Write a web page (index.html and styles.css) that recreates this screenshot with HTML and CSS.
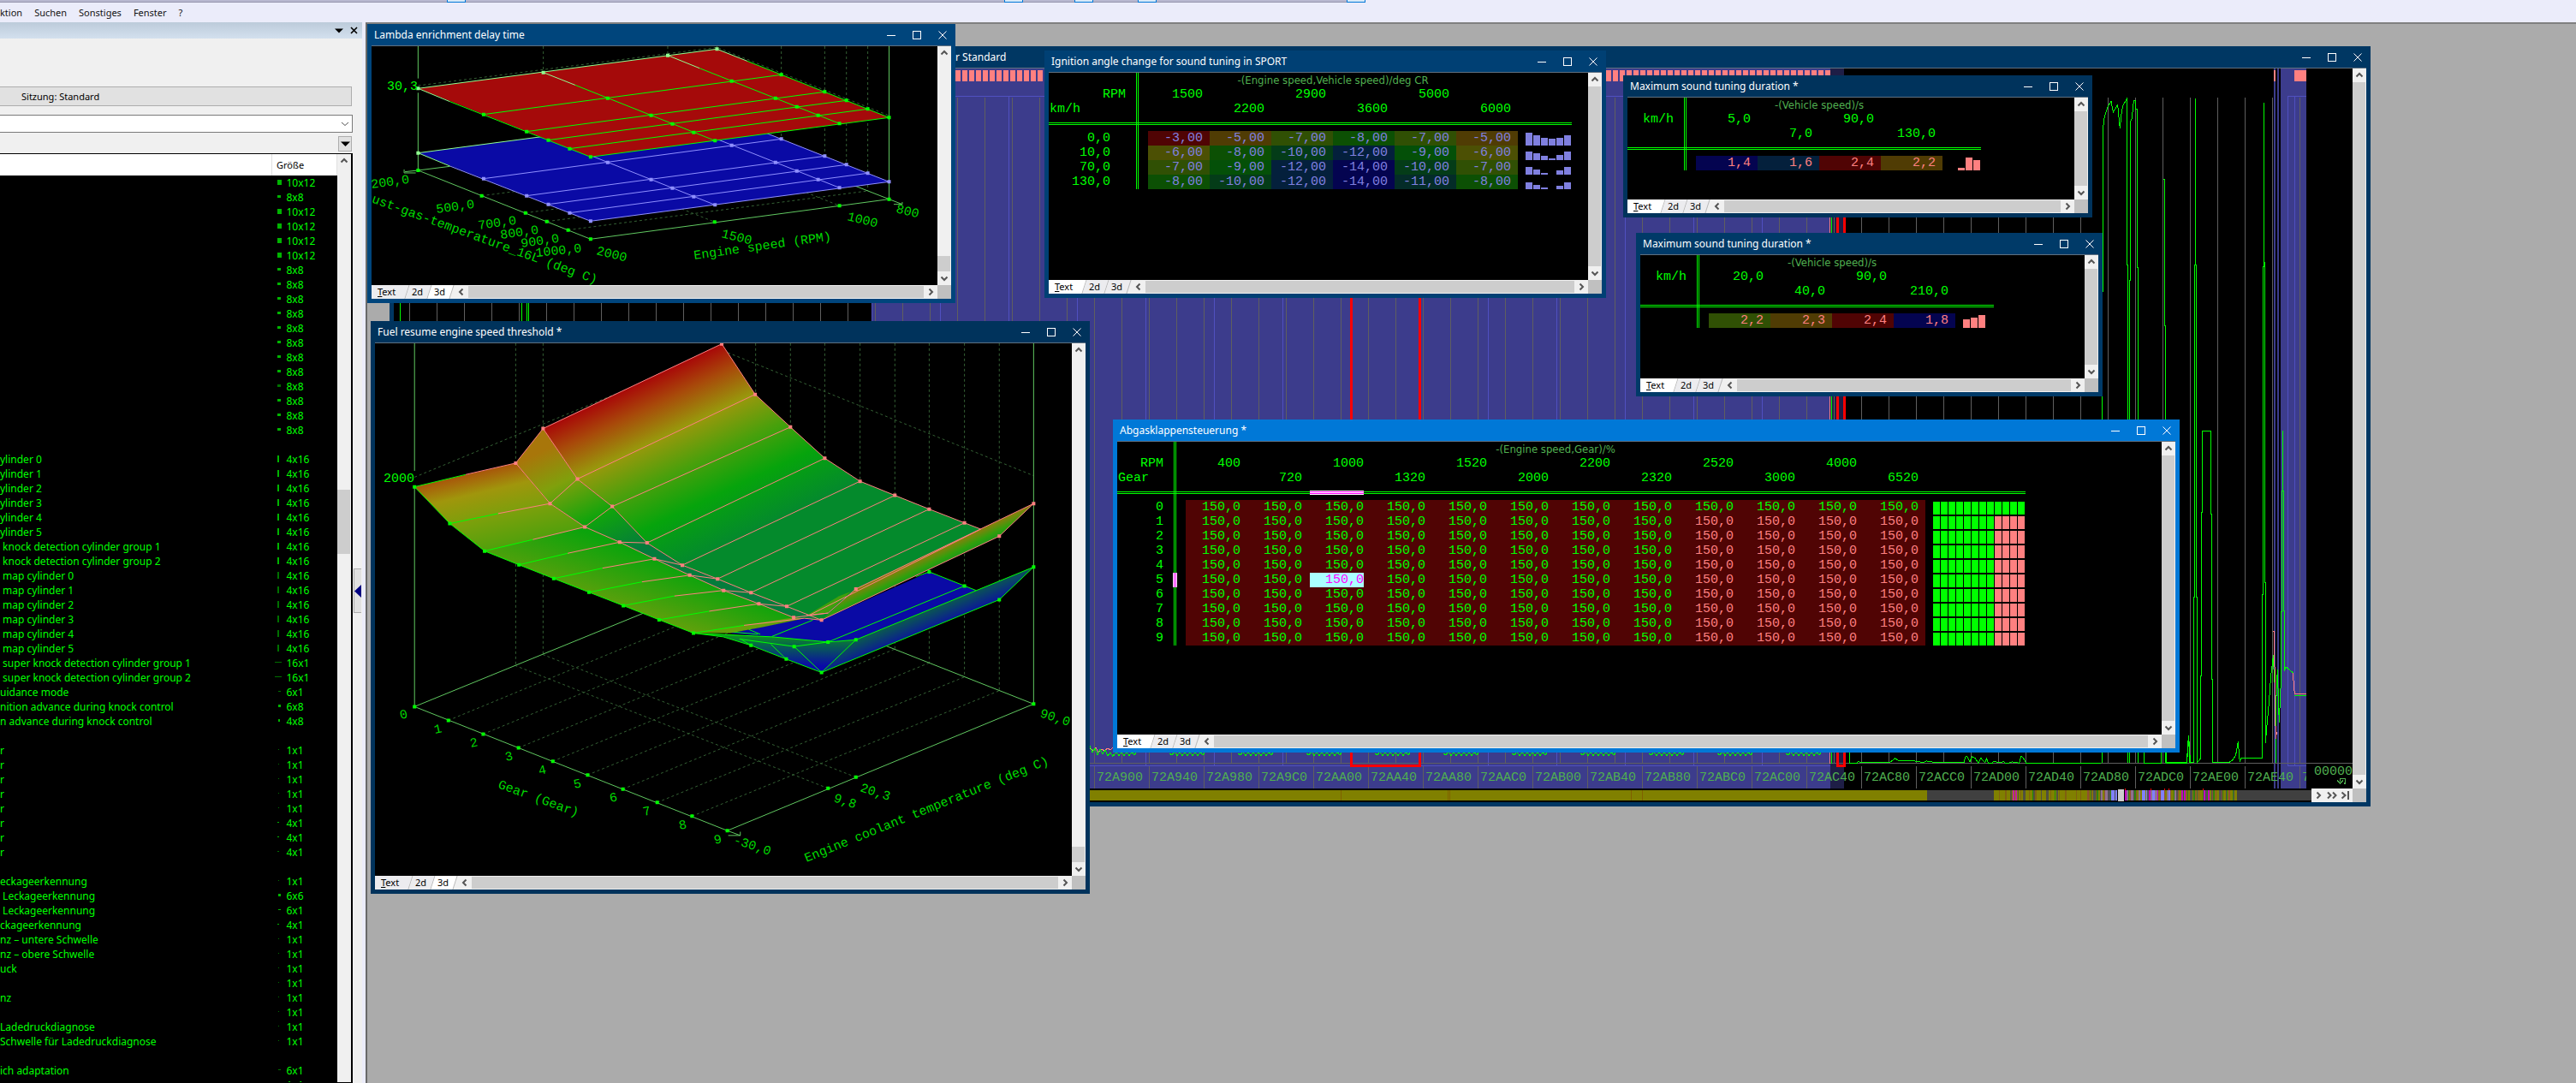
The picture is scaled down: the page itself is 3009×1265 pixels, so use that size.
FILE: index.html
```
<!DOCTYPE html>
<html lang="de">
<head>
<meta charset="utf-8">
<title>Kennfeld-Editor</title>
<link rel="stylesheet" href="styles.css">
</head>
<body>
<svg class="defs" width="0" height="0" aria-hidden="true">
  <symbol id="min" viewBox="0 0 12 12"><path d="M1 6.5h10"/></symbol>
  <symbol id="max" viewBox="0 0 12 12"><rect x="1.5" y="1.5" width="9" height="9"/></symbol>
  <symbol id="close" viewBox="0 0 12 12"><path d="M1.5 1.5l9 9M10.5 1.5l-9 9"/></symbol>
  <symbol id="up" viewBox="0 0 16 16"><path d="M4.500 9.500L8 6l3.500 3.500"/></symbol>
  <symbol id="down" viewBox="0 0 16 16"><path d="M4.500 6.500L8 10l3.500-3.500"/></symbol>
  <symbol id="left" viewBox="0 0 16 16"><path d="M9.500 4.500L6 8l3.500 3.500"/></symbol>
  <symbol id="right" viewBox="0 0 16 16"><path d="M6.500 4.500L10 8l-3.500 3.500"/></symbol>
  <symbol id="right2" viewBox="0 0 16 16"><path d="M3 4.500L6.500 8 3 11.500M9 4.500L12.500 8 9 11.500"/></symbol>
  <symbol id="last" viewBox="0 0 16 16"><path d="M3.500 4.500L7.500 8l-4 3.500M11 3v10"/></symbol>
</svg>

<div class="toolbar"><i></i><i></i><i></i><i></i><i></i></div>
<nav class="menubar">
  <button type="button">ktion</button><button type="button">Suchen</button><button type="button">Sonstiges</button><button type="button">Fenster</button><button type="button">?</button>
</nav>

<main class="workspace">
<aside class="panel">
  <div class="panel-title">
    <button type="button" aria-label="Menü"><svg width="10" height="6" viewBox="0 0 10 6"><path d="M0 0.500h10L5 5.500z" fill="#000"/></svg></button>
    <button type="button" aria-label="Schließen"><svg width="9" height="9" viewBox="0 0 9 9"><path d="M1 1l7 7M8 1L1 8" stroke="#000" stroke-width="1.600"/></svg></button>
  </div>
  <div class="panel-body">
    <div class="panel-main">
      <button type="button" class="session">Sitzung: Standard</button>
      <div class="combo"><select aria-label="Filter"><option></option></select><svg width="10" height="6" viewBox="0 0 10 6"><path d="M1 1l4 3.500L9 1" fill="none" stroke="#555"/></svg></div>
      <div class="options"><button type="button" aria-label="Optionen"><svg width="11" height="6" viewBox="0 0 11 6"><path d="M0 0.500h11L5.500 6z" fill="#000"/></svg></button></div>
      <div class="list">
        <table>
          <thead><tr><th></th><th>Größe</th></tr></thead>
          <tbody>
<tr><td><td><i class="a"></i>10x12
<tr><td><td><i class="b"></i>8x8
<tr><td><td><i class="a"></i>10x12
<tr><td><td><i class="a"></i>10x12
<tr><td><td><i class="a"></i>10x12
<tr><td><td><i class="a"></i>10x12
<tr><td><td><i class="b"></i>8x8
<tr><td><td><i class="b"></i>8x8
<tr><td><td><i class="b"></i>8x8
<tr><td><td><i class="b"></i>8x8
<tr><td><td><i class="b"></i>8x8
<tr><td><td><i class="b"></i>8x8
<tr><td><td><i class="b"></i>8x8
<tr><td><td><i class="b"></i>8x8
<tr><td><td><i class="b dim"></i>8x8
<tr><td><td><i class="b"></i>8x8
<tr><td><td><i class="b"></i>8x8
<tr><td><td><i class="b"></i>8x8
<tr><td><td>
<tr><td>ylinder 0<td><i class="c"></i>4x16
<tr><td>ylinder 1<td><i class="c"></i>4x16
<tr><td>ylinder 2<td><i class="c"></i>4x16
<tr><td>ylinder 3<td><i class="c"></i>4x16
<tr><td>ylinder 4<td><i class="c"></i>4x16
<tr><td>ylinder 5<td><i class="c"></i>4x16
<tr><td>&nbsp;knock detection cylinder group 1<td><i class="c"></i>4x16
<tr><td>&nbsp;knock detection cylinder group 2<td><i class="c"></i>4x16
<tr><td>&nbsp;map cylinder 0<td><i class="c dim"></i>4x16
<tr><td>&nbsp;map cylinder 1<td><i class="c dim"></i>4x16
<tr><td>&nbsp;map cylinder 2<td><i class="c dim"></i>4x16
<tr><td>&nbsp;map cylinder 3<td><i class="c dim"></i>4x16
<tr><td>&nbsp;map cylinder 4<td><i class="c dim"></i>4x16
<tr><td>&nbsp;map cylinder 5<td><i class="c dim"></i>4x16
<tr><td>&nbsp;super knock detection cylinder group 1<td><i class="d dim"></i>16x1
<tr><td>&nbsp;super knock detection cylinder group 2<td><i class="d dim"></i>16x1
<tr><td>uidance mode<td><i class="e dim"></i>6x1
<tr><td>nition advance during knock control<td><i class="f"></i>6x8
<tr><td>n advance during knock control<td><i class="g"></i>4x8
<tr><td><td>
<tr><td>r<td><i class="h dim"></i>1x1
<tr><td>r<td><i class="h dim"></i>1x1
<tr><td>r<td><i class="h dim"></i>1x1
<tr><td>r<td><i class="h dim"></i>1x1
<tr><td>r<td><i class="h dim"></i>1x1
<tr><td>r<td><i class="i"></i>4x1
<tr><td>r<td><i class="i"></i>4x1
<tr><td>r<td><i class="i dim"></i>4x1
<tr><td><td>
<tr><td>eckageerkennung<td><i class="h dim"></i>1x1
<tr><td>&nbsp;Leckageerkennung<td><i class="f"></i>6x6
<tr><td>&nbsp;Leckageerkennung<td><i class="e"></i>6x1
<tr><td>ckageerkennung<td><i class="i"></i>4x1
<tr><td>nz – untere Schwelle<td><i class="h dim"></i>1x1
<tr><td>nz – obere Schwelle<td><i class="h dim"></i>1x1
<tr><td>uck<td><i class="h dim"></i>1x1
<tr><td><td><i class="h dim"></i>1x1
<tr><td>nz<td><i class="h dim"></i>1x1
<tr><td><td><i class="h dim"></i>1x1
<tr><td>Ladedruckdiagnose<td><i class="h dim"></i>1x1
<tr><td>Schwelle für Ladedruckdiagnose<td><i class="h dim"></i>1x1
<tr><td><td>
<tr><td>ich adaptation<td><i class="e dim"></i>6x1
<tr><td><td><i class="h dim"></i>1x1
          </tbody>
        </table>
        <div class="vscroll list-scroll"><button type="button" aria-label="Nach oben"><svg><use href="#up"/></svg></button><span></span></div>
      </div>
    </div>
    <div class="splitter"><button type="button" aria-label="Einklappen"><svg width="8" height="15" viewBox="0 0 8 15"><path d="M8 0v15L0 7.500z" fill="#000080"/></svg></button></div>
  </div>
</aside>

<section class="desktop">

<article class="window hex">
  <header><h2>r Standard</h2><div class="ctl"><button type="button" aria-label="Minimieren"><svg><use href="#min"/></svg></button><button type="button" aria-label="Maximieren"><svg><use href="#max"/></svg></button><button type="button" aria-label="Schließen"><svg><use href="#close"/></svg></button></div></header>
  <div class="client">
    <svg class="view" viewBox="460 80 2288 841" preserveAspectRatio="xMinYMin slice" shape-rendering="crispEdges">
      <defs>
        <pattern id="g32" patternUnits="userSpaceOnUse" x="1118" y="0" width="32" height="2000"><rect width="1" height="2000" fill="#5f5f5f"/></pattern>
        <pattern id="g64" patternUnits="userSpaceOnUse" x="1342" y="0" width="64" height="2000"><rect width="1" height="2000" fill="#5f5f5f"/></pattern>
        <pattern id="v80" patternUnits="userSpaceOnUse" x="1018" y="0" width="80" height="2000"><rect width="1" height="2000" fill="#5050c0"/></pattern>
        <pattern id="s8" patternUnits="userSpaceOnUse" x="1124" y="0" width="8" height="2000"><rect width="6" height="2000" fill="#ff8080"/></pattern>
        <pattern id="wave" patternUnits="userSpaceOnUse" x="1278" y="0" width="80" height="2000"><path d="M8 880l3 2 3-4 3 5 3-5 3 5 3-5 3 5 3-5 3 5 3-5 3 5 3-5 3 4 3-4" fill="none" stroke="#0f0"/></pattern>
      </defs>
      <rect x="1018" y="80" width="1120" height="841" fill="#3c3c8c"/>
      <rect x="2138" y="80" width="16" height="841" fill="#1e1e46"/>
      <path fill="#3c3c8c" d="M2656 80h2v841h-2zM2660 80h2v841h-2zM2664 80h30v841h-30z"/>
      <rect x="1018" y="82" width="1120" height="13" fill="url(#s8)"/>
      <path fill="#ff8080" d="M2656 82h2v13h-2zM2680 82h14v13h-14z"/>
      <rect x="460" y="114" width="2234" height="778" fill="url(#g32)"/>
      <rect x="1018" y="112" width="1120" height="782" fill="url(#v80)"/>
      <path fill="none" stroke="#5050c0" d="M1018 112.500h1120M1018 894.500h1120M2672 112.500h22M2672.500 112v782M2680.500 112v782M2672 894.500h22"/>
      <path fill="none" stroke="#5f5f5f" d="M460 891.500h2288"/>
      <rect x="460" y="895" width="2234" height="26" fill="url(#g64)"/>
      <path stroke="#0f0" fill="none" d="M467.500 114v778M609.500 114v778M615.500 114v778M617.500 114v778M2139.500 114v778"/>
      <path stroke="#ff8080" fill="none" d="M2137.500 114v778"/>
      <path stroke="#ff8080" fill="none" d="M1273 874l4 3 3-4 3 6 4-4 3 2 4-3 3 2 3-3"/>
      <path stroke="#0f0" fill="none" d="M1273 871l3 8 3-5 3 8 3-7 3 6 3-5 3 7 3-4 3 5"/>
      <rect x="1300" y="876" width="838" height="8" fill="url(#wave)"/>
      <path fill="none" stroke="red" stroke-width="3" d="M1578.500 114v780h80v-780M2146.500 114v780h8v-780"/>
      <g fill="none" stroke="#0f0" transform="translate(2430 40) scale(.3333 .5804)">
        <g class="thin">
        <path d="M76.500 1466V518H79V193L85 165 97 145 108 135 115 157 131 142 139 190 145 155 150 143 163 130V464H166V1466M173 1466V496H176V175L181 170 187 133H193V150H200V469H202.500V1466M291 292H295V586H298V1466"/>
        <path d="M301 1445V1466H374L379 1411 384 1466H397V1132H401V464H403.500V130 464H406.500V1132H409.500V1466L421 1458V1292H424V963H427V799H458V965H461V1299H464V1466H520L535 1460 545 1450 553 1424 559 1465 563 1457H637V1127H640.500V467H643V138 460H646V1104H649V1426L655 1385 662 1340 668 1290 674 1262 676 1250 680 1305M685 1466V1360L691 1278 697 1385 703 1305V1162H706V920H709V798 920H712V1160H715V1282L720 1273 745 1285M751 1331H792"/>
        <path stroke="#ff8080" d="M675 1202H680L682 1330 685 1418 688 1405M745 1285L751 1328H792"/>
        </g>
      </g>
      <g fill="none" stroke="#0f0" transform="translate(1930 480) scale(.4082 .3333)">
        <path class="thin" d="M564 1197V1235H585L590 1228 594 1231H680L695 1218 705 1225 752 1227 775 1232 785 1227 810 1232H892L897 1210 902 1212 909 1230 915 1212 925 1218 933 1235 940 1216 952 1232 957 1218 962 1235H972L977 1228 990 1232H1000L1005 1228 1012 1236 1030 1230 1050 1234 1055 1210 1061 1215 1070 1234H1284M1407 1197V1235H1456V1197M1471 1235H1529L1535 1137 1540 1235"/>
      </g>
      <g class="mono dimtext">
        <text x="1281" y="912">72A900</text><text x="1345" y="912">72A940</text><text x="1409" y="912">72A980</text><text x="1473" y="912">72A9C0</text><text x="1537" y="912">72AA00</text><text x="1601" y="912">72AA40</text><text x="1665" y="912">72AA80</text><text x="1729" y="912">72AAC0</text><text x="1793" y="912">72AB00</text><text x="1857" y="912">72AB40</text><text x="1921" y="912">72AB80</text><text x="1985" y="912">72ABC0</text><text x="2049" y="912">72AC00</text><text x="2113" y="912">72AC40</text><text x="2177" y="912">72AC80</text><text x="2241" y="912">72ACC0</text><text x="2305" y="912">72AD00</text><text x="2369" y="912">72AD40</text><text x="2433" y="912">72AD80</text><text x="2497" y="912">72ADC0</text><text x="2561" y="912">72AE00</text><text x="2625" y="912">72AE40</text><text x="2689" y="912">7</text>
        <rect x="2694" y="897" width="9" height="24" fill="#000"/>
        <text x="2703" y="905">00000</text>
        <path d="M2737.500 915h2v-5.500h-6v3M2730 911.500l3.500 3.500 3.500-3.500" fill="none" stroke="#50b050" stroke-width="1.500"/>
      </g>
    </svg>
    <div class="vscroll"><button type="button" aria-label="Nach oben"><svg><use href="#up"/></svg></button><span></span><button type="button" aria-label="Nach unten"><svg><use href="#down"/></svg></button></div>
    <div class="foot">
      <svg class="overview" viewBox="460 921 2240 16" preserveAspectRatio="xMinYMin slice" shape-rendering="crispEdges">
        <rect x="460" y="923" width="1791" height="12" fill="#808000"/>
        <path stroke="#806000" fill="none" d="M1566.500 923v12M1691.500 923v12M1693.500 923v12M1905.500 923v12M1918.500 923v12"/>
        <rect x="2251" y="923" width="449" height="12" fill="#404040"/>
        <rect x="2329" y="923" width="284" height="12" fill="#808000"/>
        <g fill="none" stroke-width="12">
          <path d="M2335 929h138" stroke="#806010" stroke-dasharray="1 6 2 11 1 4 1 9"/>
          <path d="M2348 929h60" stroke="#505040" stroke-dasharray="2 7 1 5 3 9"/>
          <path d="M2351 929h5" stroke="#c020a0" stroke-dasharray="2 1"/>
          <path d="M2400 929h1M2374 929h1" stroke="#209000"/>
          <path d="M2438 929h34M2483 929h130" stroke="#905030" stroke-dasharray="2 3 1 5 2 7"/>
          <path d="M2442 929h32M2486 929h126" stroke="#308010" stroke-dasharray="1 6 2 9 1 4"/>
          <path d="M2445 929h28M2490 929h120" stroke="#505050" stroke-dasharray="3 5 1 8"/>
          <path d="M2454 929h20M2484 929h60" stroke="#907090" stroke-dasharray="2 3 3 6"/>
          <path d="M2466 929h7M2502 929h6M2514 929h3M2524 929h5M2533 929h2" stroke="#8080ff" stroke-dasharray="4 1"/>
          <path d="M2482 929h2M2510 929h2M2520 929h1M2548 929h5M2574 929h2M2579 929h2" stroke="#c000c0" stroke-dasharray="2 1"/>
        </g>
        <path fill="red" d="M2482 921h1v2h-1zM2512 921h1v2h-1zM2528 921h1v2h-1zM2533 921h1v2h-1zM2573 921h1v2h-1z"/>
        <rect x="2473" y="921" width="9" height="16" fill="#000"/><rect x="2474" y="922" width="7" height="14" fill="#cdcdcd"/>
      </svg>
      <button type="button" aria-label="Weiter"><svg><use href="#right"/></svg></button><button type="button" aria-label="Schnell weiter"><svg><use href="#right2"/></svg></button><button type="button" aria-label="Ende"><svg><use href="#last"/></svg></button>
    </div>
    <div class="corner"></div>
  </div>
</article>

<article class="window lambda">
  <header><h2>Lambda enrichment delay time</h2><div class="ctl"><button type="button" aria-label="Minimieren"><svg><use href="#min"/></svg></button><button type="button" aria-label="Maximieren"><svg><use href="#max"/></svg></button><button type="button" aria-label="Schließen"><svg><use href="#close"/></svg></button></div></header>
  <div class="client">
    <svg class="view" viewBox="434 54 661 279" preserveAspectRatio="xMinYMin slice">
      <g fill="none" class="thin" transform="translate(420 0) scale(.4528 .3333)">
        <path class="dash" d="M474 162V660M795 162V660M922 162V660M1088 162V545M1200 162V607M1256 162V637M1311 162V669M151 300L922 166 1366 405M315 686L600 636M428 746L800 680M484 776L900 702M538 806L1311 669M474 539L916 778M795 482L1238 721"/>
        <path stroke="#60c860" d="M151 162V275M151 325V597L596 838 1366 698V162M151 597L233 583M1230 626L1400 716M115 594V606H145M117 602L151 597M1378 716H1400V708"/>
        <path fill="#0a0aa5" d="M151 536L922 398 1366 637 596 775z"/>
        <path stroke="#9090ff" d="M233 582L596 775 1366 637 922 398M320 626L1088 487M431 686L1200 547M487 716L1256 577M542 746L1311 607M474 479L917 718M795 419L1238 658"/>
        <path stroke="#90ff90" d="M233 582L151 536 470 479"/>
        <path fill="#a50a0a" d="M151 310L922 172 1366 412 596 550z"/>
        <path stroke="#0f0" d="M233 356L596 550 1366 412 1000 214M320 401L1088 262M431 461L1200 322M487 491L1256 352M542 521L1311 382M556 298L917 493M877 239L1238 433"/>
        <path stroke="#90ff90" d="M233 356L151 310 922 172 1000 214M474 254L556 298M795 194L877 239"/>
        <path class="dot" stroke="#0f0" d="M320 401h0M431 461h0M487 491h0M542 521h0M596 550h0M917 493h0M1238 433h0M1366 412h0M1311 382h0M1256 352h0M1200 322h0M1088 262h0M640 344h0M752 404h0M807 434h0M862 464h0M960 284h0M1073 344h0M1128 374h0M1183 404h0M151 597h0M315 686h0M428 746h0M483 776h0M538 806h0M596 838h0M916 778h0M1238 721h0M1366 698h0"/>
        <path class="dot" stroke="#90ff90" d="M151 310h0M474 254h0M795 194h0M922 172h0M151 536h0"/>
        <path class="dot" stroke="#9090ff" d="M320 626h0M431 686h0M487 716h0M542 746h0M596 775h0M917 718h0M1238 658h0M1366 637h0M1311 607h0M1256 577h0M1200 547h0M1088 487h0M640 569h0M752 629h0M807 659h0M862 689h0M960 509h0M1073 569h0M1128 599h0M1183 629h0"/>
      </g>
      <g class="mono axis">
        <text x="452" y="105" fill="#0f0">30,3</text>
        <text transform="translate(434 220) rotate(-8)">200,0</text>
        <text transform="translate(510 249) rotate(-8)">500,0</text>
        <text transform="translate(559 268) rotate(-8)">700,0</text>
        <text transform="translate(585 279) rotate(-8)">800,0</text>
        <text transform="translate(609 289) rotate(-8)">900,0</text>
        <text transform="translate(626 300) rotate(-6)">1000,0</text>
        <text transform="translate(696 297) rotate(14)">2000</text>
        <text transform="translate(842 277) rotate(14)">1500</text>
        <text transform="translate(989 257) rotate(14)">1000</text>
        <text transform="translate(1046 248) rotate(14)">800</text>
        <text transform="translate(811 303) rotate(-8)">Engine speed (RPM)</text>
        <text transform="translate(425 233) rotate(20)">aust-gas-temperature_16L (deg C)</text>
      </g>
    </svg>
    <div class="vscroll end"><button type="button" aria-label="Nach oben"><svg><use href="#up"/></svg></button><span></span><button type="button" aria-label="Nach unten"><svg><use href="#down"/></svg></button></div>
    <div class="foot"><div class="tabs"><button type="button"><u>T</u>ext</button><button type="button">2d</button><button type="button" class="on">3d</button></div><button type="button" aria-label="Nach links"><svg><use href="#left"/></svg></button><span class="hthumb"></span><button type="button" aria-label="Nach rechts"><svg><use href="#right"/></svg></button></div>
    <div class="corner"></div>
  </div>
</article>

<article class="window fuel">
  <header><h2>Fuel resume engine speed threshold *</h2><div class="ctl"><button type="button" aria-label="Minimieren"><svg><use href="#min"/></svg></button><button type="button" aria-label="Maximieren"><svg><use href="#max"/></svg></button><button type="button" aria-label="Schließen"><svg><use href="#close"/></svg></button></div></header>
  <div class="client">
    <svg class="view" viewBox="438 401 814 622" preserveAspectRatio="xMinYMin slice">
      <defs>
        <linearGradient id="heat" gradientUnits="userSpaceOnUse" x1="377" y1="301" x2="759" y2="946"><stop offset="0" stop-color="#a80808"/><stop offset=".09" stop-color="#a84a0a"/><stop offset=".2" stop-color="#98980c"/><stop offset=".33" stop-color="#48a00c"/><stop offset=".46" stop-color="#06a40c"/><stop offset=".62" stop-color="#048a2c"/><stop offset="1" stop-color="#048a2c"/></linearGradient>
        <linearGradient id="heat2" gradientUnits="userSpaceOnUse" x1="320" y1="395" x2="560" y2="800"><stop offset="0" stop-color="#a8760a"/><stop offset=".2" stop-color="#80a00c"/><stop offset=".45" stop-color="#10a40c"/><stop offset=".7" stop-color="#047c3c"/><stop offset="1" stop-color="#047c3c"/></linearGradient>
        <linearGradient id="cold" gradientUnits="userSpaceOnUse" x1="100" y1="458" x2="253" y2="982"><stop offset="0" stop-color="#a8560a"/><stop offset=".1" stop-color="#a0960c"/><stop offset=".24" stop-color="#78a00c"/><stop offset=".4" stop-color="#4ca00c"/><stop offset="1" stop-color="#64a00c"/></linearGradient>
        <linearGradient id="fade" gradientUnits="userSpaceOnUse" x1="400" y1="705" x2="464" y2="577"><stop offset="0" stop-color="#04a40c" stop-opacity="0"/><stop offset="1" stop-color="#04a40c" stop-opacity=".9"/></linearGradient>
        <linearGradient id="lip" gradientUnits="userSpaceOnUse" x1="1210" y1="628" x2="1244" y2="684"><stop offset="0" stop-color="#b0700c"/><stop offset=".5" stop-color="#30a00c"/><stop offset="1" stop-color="#048a2c"/></linearGradient>
        <linearGradient id="deep" gradientUnits="userSpaceOnUse" x1="1200" y1="780" x2="1232" y2="840"><stop offset="0" stop-color="#0a6a3c"/><stop offset="1" stop-color="#0a0aa8"/></linearGradient>
        <linearGradient id="deep2" gradientUnits="userSpaceOnUse" x1="0" y1="850" x2="0" y2="940"><stop offset="0" stop-color="#10a010"/><stop offset=".4" stop-color="#086050"/><stop offset="1" stop-color="#0a0aa8"/></linearGradient>
      </defs>
      <g fill="none" class="thin" transform="translate(430 370) scale(.5421 .4337)">
        <path class="dash" d="M318 71V940M377 71V910M835 71V746M910 71V784M984 71V820M1060 71V858M1135 71V895M1209 71V932M1285 71V970M1360 71V1007M100 432L762 90 1434 428M173 1087L833 746M248 1124L908 783M324 1161L984 820M398 1197L1060 858M473 1234L1135 895M549 1272L1209 932M623 1308L1285 970M698 1345L1360 1007M991 1270L318 940M1051 1240L377 910"/>
        <path stroke="#60c860" d="M100 71V415M100 458V1050L774 1384 1434 1043V71M100 1050L762 712 1434 1043M774 1384L802 1397V1387M776 1397H802"/>
        <path fill="#0a0aa5" d="M780 852L820 842 940 812 977 817 1209 687 1310 737 1051 870 991 876z"/>
        <path fill="url(#deep)" d="M1051 870L1434 674 1360 762 977 958z"/>
        <path fill="url(#deep2)" d="M701 852L870 862 991 876 1051 870 977 958 825 885 765 862z"/>
        <path stroke="#0f0" d="M701 852L765 862 825 885 901 922 977 958 1360 762 1434 674 1051 870 991 876 918 888 800 868M701 852L870 862 991 876M820 842L845 855M840 855L775 848M870 861L958 817M918 888L977 958 1051 870M868 882L901 922M805 870L825 885M991 876L1285 725M1209 687L1310 737M1209 687L1180 700"/>
        <path fill="url(#cold)" d="M100 458L318 394 392 503 467 566 542 607 617 652 693 696 766 737 842 773 917 810 965 806 850 836 780 852 701 852 627 816 550 778 476 742 400 705 325 668 251 631 176 557z"/>
        <path fill="url(#fade)" d="M251 631L467 566 542 607 617 652 693 696 766 737 842 773 917 810 701 852z"/>
        <path fill="url(#heat2)" d="M318 394L377 301 451 437 526 511 601 609 677 669 753 706 825 743 902 780 977 817 917 810 842 773 766 737 693 696 617 652 542 607 467 566 392 503z"/>
        <path fill="url(#heat)" d="M377 301L762 73 834 209 910 297 984 381 1060 443 1135 481 1209 518 1285 555 1360 591 977 817 902 780 825 743 753 706 677 669 601 609 526 511 451 437z"/>
        <path fill="url(#lip)" d="M977 817L1051 733 1434 503 1360 591z"/>
        <path fill="#40a00c" d="M945 804L991 796 1040 740 1015 752z"/>
        <path stroke="#0f0" d="M210 425L100 458 176 557 251 631 325 668 400 705 476 742 550 778 627 816 701 852 810 831M176 557L280 530M251 631L355 600M325 668L430 637M400 705L505 677M476 742L590 714M550 778L660 752M627 816L735 793"/>
        <path stroke="#ff8080" d="M210 425L318 394 377 301 762 73 834 209 910 297 984 381 1060 443 1135 481 1209 518 1285 555 1320 572M318 394L392 503 467 566 542 607 617 652 693 696 766 737 842 773 917 810M377 301L451 437 526 511 601 609 677 669 753 706 825 743 902 780 977 817 1360 591 1434 503 1051 733 991 798 917 810M280 530L392 503 451 437 834 209M355 600L467 566 526 511 910 297M430 637L542 607 601 609 984 381M505 677L617 652 677 669 1060 443M590 714L693 696 753 706 1135 481M660 752L766 737 825 743 1209 518M735 793L842 773 902 780 1285 555M810 831L940 812 977 817M945 804L991 798M950 804L1320 572"/>
        <path class="dot" stroke="#0f0" d="M100 458h0M176 557h0M251 631h0M325 668h0M400 705h0M476 742h0M550 778h0M627 816h0M701 852h0M825 885h0M901 922h0M977 958h0M918 888h0M991 876h0M1051 870h0M1360 762h0M1434 674h0M1209 687h0M1285 725h0M100 1050h0M173 1087h0M248 1124h0M324 1161h0M398 1197h0M473 1234h0M549 1272h0M623 1308h0M698 1345h0M774 1384h0M991 1270h0M1051 1240h0M1434 1043h0"/>
        <path class="dot" stroke="#ff8080" d="M318 394h0M377 301h0M762 73h0M834 209h0M910 297h0M984 381h0M1060 443h0M1135 481h0M1209 518h0M1285 555h0M1360 591h0M1434 503h0M1051 733h0M977 817h0M392 503h0M467 566h0M542 607h0M617 652h0M693 696h0M766 737h0M842 773h0M917 810h0M451 437h0M526 511h0M601 609h0M677 669h0M753 706h0M825 743h0M902 780h0"/>
      </g>
      <g class="mono axis">
        <text x="448" y="563" fill="#0f0">2000</text>
        <text transform="translate(468 840) rotate(-12)">0</text>
        <text transform="translate(508 857) rotate(-12)">1</text>
        <text transform="translate(550 873) rotate(-12)">2</text>
        <text transform="translate(591 889) rotate(-12)">3</text>
        <text transform="translate(630 905) rotate(-12)">4</text>
        <text transform="translate(671 921) rotate(-12)">5</text>
        <text transform="translate(713 937) rotate(-12)">6</text>
        <text transform="translate(752 953) rotate(-12)">7</text>
        <text transform="translate(794 969) rotate(-12)">8</text>
        <text transform="translate(835 986) rotate(-12)">9</text>
        <text transform="translate(581 920) rotate(20)">Gear (Gear)</text>
        <text transform="translate(856 985) rotate(18)">-30,0</text>
        <text transform="translate(973 936) rotate(18)">9,8</text>
        <text transform="translate(1004 924) rotate(18)">20,3</text>
        <text transform="translate(1214 837) rotate(18)">90,0</text>
        <text transform="translate(942 1007) rotate(-22)">Engine coolant temperature (deg C)</text>
      </g>
    </svg>
    <div class="vscroll end"><button type="button" aria-label="Nach oben"><svg><use href="#up"/></svg></button><span></span><button type="button" aria-label="Nach unten"><svg><use href="#down"/></svg></button></div>
    <div class="foot"><div class="tabs"><button type="button"><u>T</u>ext</button><button type="button">2d</button><button type="button" class="on">3d</button></div><button type="button" aria-label="Nach links"><svg><use href="#left"/></svg></button><span class="hthumb"></span><button type="button" aria-label="Nach rechts"><svg><use href="#right"/></svg></button></div>
    <div class="corner"></div>
  </div>
</article>

<article class="window ignition">
  <header><h2>Ignition angle change for sound tuning in SPORT</h2><div class="ctl"><button type="button" aria-label="Minimieren"><svg><use href="#min"/></svg></button><button type="button" aria-label="Maximieren"><svg><use href="#max"/></svg></button><button type="button" aria-label="Schließen"><svg><use href="#close"/></svg></button></div></header>
  <div class="client">
    <div class="view">
      <table class="map violet">
        <colgroup><col class="ch wide"><col class="cg"><col span="6" class="cv"><col class="cs"><col class="cb6"></colgroup>
        <tr><th><td><th colspan="6" class="cap">-(Engine speed,Vehicle speed)/deg CR<td><td>
        <tr><th>RPM<td><th>1500<th><th>2900<th><th>5000<th><td><td>
        <tr><th class="l">km/h<td><th><th>2200<th><th>3600<th><th>6000<td><td>
        <tr class="rule"><th><td colspan="9">
        <tr><th class="n">0,0<td><td class="c1">-3,00<td class="c2">-5,00<td class="c4">-7,00<td class="c5">-8,00<td class="c4">-7,00<td class="c2">-5,00<td><td><svg width="54" height="17"><path d="M0 17v-15h8v15M9 17v-12h8v12M18 17v-9h8v9M27 17v-8h8v8M36 17v-9h8v9M45 17v-12h8v12"/></svg>
        <tr><th class="n">10,0<td><td class="c3">-6,00<td class="c5">-8,00<td class="c7">-10,00<td class="c9">-12,00<td class="c6">-9,00<td class="c3">-6,00<td><td><svg width="54" height="17"><path d="M0 17v-10h8v10M9 17v-8h8v8M18 17v-5h8v5M27 17v-2h8v2M36 17v-6h8v6M45 17v-10h8v10"/></svg>
        <tr><th class="n">70,0<td><td class="c4">-7,00<td class="c6">-9,00<td class="c9">-12,00<td class="c10">-14,00<td class="c7">-10,00<td class="c4">-7,00<td><td><svg width="54" height="17"><path d="M0 17v-9h8v9M9 17v-6h8v6M18 17v-2h8v2M36 17v-5h8v5M45 17v-9h8v9"/></svg>
        <tr><th class="n">130,0<td><td class="c5">-8,00<td class="c7">-10,00<td class="c9">-12,00<td class="c10">-14,00<td class="c8">-11,00<td class="c5">-8,00<td><td><svg width="54" height="17"><path d="M0 17v-8h8v8M9 17v-5h8v5M18 17v-2h8v2M36 17v-4h8v4M45 17v-8h8v8"/></svg>
      </table>
    </div>
    <div class="vscroll"><button type="button" aria-label="Nach oben"><svg><use href="#up"/></svg></button><span></span><button type="button" aria-label="Nach unten"><svg><use href="#down"/></svg></button></div>
    <div class="foot"><div class="tabs"><button type="button" class="on"><u>T</u>ext</button><button type="button">2d</button><button type="button">3d</button></div><button type="button" aria-label="Nach links"><svg><use href="#left"/></svg></button><span class="hthumb"></span><button type="button" aria-label="Nach rechts"><svg><use href="#right"/></svg></button></div>
    <div class="corner"></div>
  </div>
</article>

<article class="window sound-a">
  <header><h2>Maximum sound tuning duration *</h2><div class="ctl"><button type="button" aria-label="Minimieren"><svg><use href="#min"/></svg></button><button type="button" aria-label="Maximieren"><svg><use href="#max"/></svg></button><button type="button" aria-label="Schließen"><svg><use href="#close"/></svg></button></div></header>
  <div class="client">
    <div class="view">
      <table class="map salmon">
        <colgroup><col class="ch"><col class="cg"><col span="4" class="cv"><col class="cs"><col class="cb4"></colgroup>
        <tr><th><td><th colspan="4" class="cap">-(Vehicle speed)/s<td><td>
        <tr><th>km/h<td><th>5,0<th><th>90,0<th><td><td>
        <tr><th><td><th><th>7,0<th><th>130,0<td><td>
        <tr class="rule"><th><td colspan="7">
        <tr><th><td><td class="c10">1,4<td class="c9">1,6<td class="c1">2,4<td class="c2">2,2<td><td><svg width="36" height="17"><path d="M9 17v-3h8v3M18 17v-15h8v15M27 17v-12h8v12"/></svg>
      </table>
    </div>
    <div class="vscroll"><button type="button" aria-label="Nach oben"><svg><use href="#up"/></svg></button><span></span><button type="button" aria-label="Nach unten"><svg><use href="#down"/></svg></button></div>
    <div class="foot"><div class="tabs"><button type="button" class="on"><u>T</u>ext</button><button type="button">2d</button><button type="button">3d</button></div><button type="button" aria-label="Nach links"><svg><use href="#left"/></svg></button><span class="hthumb"></span><button type="button" aria-label="Nach rechts"><svg><use href="#right"/></svg></button></div>
    <div class="corner"></div>
  </div>
</article>

<article class="window sound-b">
  <header><h2>Maximum sound tuning duration *</h2><div class="ctl"><button type="button" aria-label="Minimieren"><svg><use href="#min"/></svg></button><button type="button" aria-label="Maximieren"><svg><use href="#max"/></svg></button><button type="button" aria-label="Schließen"><svg><use href="#close"/></svg></button></div></header>
  <div class="client">
    <div class="view">
      <table class="map salmon">
        <colgroup><col class="ch"><col class="cg"><col span="4" class="cv"><col class="cs"><col class="cb4"></colgroup>
        <tr><th><td><th colspan="4" class="cap">-(Vehicle speed)/s<td><td>
        <tr><th>km/h<td><th>20,0<th><th>90,0<th><td><td>
        <tr><th><td><th><th>40,0<th><th>210,0<td><td>
        <tr class="rule"><th><td colspan="7">
        <tr><th><td><td class="c4">2,2<td class="c2">2,3<td class="c1">2,4<td class="c10">1,8<td><td><svg width="36" height="17"><path d="M0 17v-10h8v10M9 17v-12h8v12M18 17v-15h8v15"/></svg>
      </table>
    </div>
    <div class="vscroll"><button type="button" aria-label="Nach oben"><svg><use href="#up"/></svg></button><span></span><button type="button" aria-label="Nach unten"><svg><use href="#down"/></svg></button></div>
    <div class="foot"><div class="tabs"><button type="button" class="on"><u>T</u>ext</button><button type="button">2d</button><button type="button">3d</button></div><button type="button" aria-label="Nach links"><svg><use href="#left"/></svg></button><span class="hthumb"></span><button type="button" aria-label="Nach rechts"><svg><use href="#right"/></svg></button></div>
    <div class="corner"></div>
  </div>
</article>

<article class="window exhaust">
  <header><h2>Abgasklappensteuerung *</h2><div class="ctl"><button type="button" aria-label="Minimieren"><svg><use href="#min"/></svg></button><button type="button" aria-label="Maximieren"><svg><use href="#max"/></svg></button><button type="button" aria-label="Schließen"><svg><use href="#close"/></svg></button></div></header>
  <div class="client">
    <div class="view">
      <table class="map full">
        <colgroup><col class="ch"><col class="cg"><col span="12" class="cv"><col class="cs"><col class="cb12"></colgroup>
        <tr><th><td><th colspan="12" class="cap">-(Engine speed,Gear)/%<td><td>
        <tr><th>RPM<td><th>400<th><th>1000<th><th>1520<th><th>2200<th><th>2520<th><th>4000<th><td><td>
        <tr><th class="l">Gear<td><th><th>720<th><th>1320<th><th>2000<th><th>2320<th><th>3000<th><th>6520<td><td>
        <tr class="rule"><th><td><td><td><td class="mark"><td colspan="11">
        <tr><th>0<td><td>150,0<td>150,0<td>150,0<td>150,0<td>150,0<td>150,0<td>150,0<td>150,0<td>150,0<td>150,0<td>150,0<td>150,0<td><td class="bars all">
        <tr><th>1<td><td>150,0<td>150,0<td>150,0<td>150,0<td>150,0<td>150,0<td>150,0<td>150,0<td class="s">150,0<td class="s">150,0<td class="s">150,0<td class="s">150,0<td><td class="bars">
        <tr><th>2<td><td>150,0<td>150,0<td>150,0<td>150,0<td>150,0<td>150,0<td>150,0<td>150,0<td class="s">150,0<td class="s">150,0<td class="s">150,0<td class="s">150,0<td><td class="bars">
        <tr><th>3<td><td>150,0<td>150,0<td>150,0<td>150,0<td>150,0<td>150,0<td>150,0<td>150,0<td class="s">150,0<td class="s">150,0<td class="s">150,0<td class="s">150,0<td><td class="bars">
        <tr><th>4<td><td>150,0<td>150,0<td>150,0<td>150,0<td>150,0<td>150,0<td>150,0<td>150,0<td class="s">150,0<td class="s">150,0<td class="s">150,0<td class="s">150,0<td><td class="bars">
        <tr><th class="cur">5<td><td>150,0<td>150,0<td><span class="sel">150,0</span><td>150,0<td>150,0<td>150,0<td>150,0<td>150,0<td class="s">150,0<td class="s">150,0<td class="s">150,0<td class="s">150,0<td><td class="bars">
        <tr><th>6<td><td>150,0<td>150,0<td>150,0<td>150,0<td>150,0<td>150,0<td>150,0<td>150,0<td class="s">150,0<td class="s">150,0<td class="s">150,0<td class="s">150,0<td><td class="bars">
        <tr><th>7<td><td>150,0<td>150,0<td>150,0<td>150,0<td>150,0<td>150,0<td>150,0<td>150,0<td class="s">150,0<td class="s">150,0<td class="s">150,0<td class="s">150,0<td><td class="bars">
        <tr><th>8<td><td>150,0<td>150,0<td>150,0<td>150,0<td>150,0<td>150,0<td>150,0<td>150,0<td class="s">150,0<td class="s">150,0<td class="s">150,0<td class="s">150,0<td><td class="bars">
        <tr><th>9<td><td>150,0<td>150,0<td>150,0<td>150,0<td>150,0<td>150,0<td>150,0<td>150,0<td class="s">150,0<td class="s">150,0<td class="s">150,0<td class="s">150,0<td><td class="bars">
      </table>
    </div>
    <div class="vscroll"><button type="button" aria-label="Nach oben"><svg><use href="#up"/></svg></button><span></span><button type="button" aria-label="Nach unten"><svg><use href="#down"/></svg></button></div>
    <div class="foot"><div class="tabs"><button type="button" class="on"><u>T</u>ext</button><button type="button">2d</button><button type="button">3d</button></div><button type="button" aria-label="Nach links"><svg><use href="#left"/></svg></button><span class="hthumb"></span><button type="button" aria-label="Nach rechts"><svg><use href="#right"/></svg></button></div>
    <div class="corner"></div>
  </div>
</article>

</section>
</main>
</body>
</html>
```
FILE: styles.css
```
* { box-sizing: border-box; }
html, body { height: 100%; }
body {
  margin: 0;
  display: flex;
  flex-direction: column;
  overflow: hidden;
  background: #ebecfa;
  font: 12px/17px "Noto Sans", "Open Sans", sans-serif;
}
button { margin: 0; padding: 0; border: 0; background: none; font: inherit; color: inherit; }
svg { display: block; }
.defs { position: absolute; }

/* toolbar remainder and menu */
.toolbar {
  display: flex;
  flex: none;
  width: 53%;
  height: 3px;
  padding-left: 522px;
  background: #b8b8d0;
  border-bottom: 1px solid #9494ac;
}
.toolbar i { width: 22px; height: 3px; background: #d8eaf8; border: 1px solid #0078d7; border-top: 0; }
.toolbar i:nth-child(2) { margin-left: 629px; }
.toolbar i:nth-child(3) { margin-left: 60px; }
.toolbar i:nth-child(4) { margin-left: 52px; }
.toolbar i:nth-child(5) { margin-left: auto; }
.menubar { display: flex; flex: none; gap: 14px; height: 23px; font-size: 11px; color: #111; }

.workspace { display: flex; flex: 1; min-height: 0; }

/* left panel */
.panel { display: flex; flex-direction: column; flex: none; width: 427px; padding-right: 4px; }
.panel-title {
  display: flex;
  flex: none;
  justify-content: flex-end;
  align-items: center;
  gap: 8px;
  height: 19px;
  padding-right: 5px;
  background: linear-gradient(#bccbda, #d3e0ee);
}
.panel-body { display: flex; flex: 1; min-height: 0; background: #f0f0f0; }
.panel-main { display: flex; flex-direction: column; flex: 1; min-width: 0; padding-top: 56px; }
.session {
  flex: none;
  height: 23px;
  margin-right: 1px;
  padding-left: 25px;
  background: #e1e1e1;
  border: 1px solid #adadad;
  border-left: 0;
  font-size: 11px;
  text-align: left;
}
.combo { position: relative; flex: none; height: 21px; margin-top: 10px; }
.combo select { width: 100%; height: 21px; appearance: none; background: #fff; border: 1px solid #7a7a7a; border-left: 0; border-radius: 0; }
.combo svg { position: absolute; right: 4px; top: 8px; }
.options { display: flex; flex: none; justify-content: flex-end; height: 24px; padding: 4px 1px 2px 0; }
.options button { display: grid; place-items: center; width: 16px; background: #e1e1e1; border: 1px solid #adadad; }
.list { display: flex; flex: 1; min-height: 0; overflow: hidden; background: #000; border: 1px solid #000; border-left: 0; border-right-width: 2px; }
.list table { flex: 1; align-self: flex-start; table-layout: fixed; border-collapse: collapse; color: #0f0; }
.list th { height: 25px; padding: 0 0 0 5px; background: #fff; color: #000; font-weight: 400; text-align: left; font-size: 11px; border-right: 1px solid #e0e0e0; }
.list th:last-child { width: 76px; }
.list td { height: 17px; padding: 0; white-space: nowrap; }
.list td:last-child { padding-left: 5px; }
.list i { display: inline-block; vertical-align: middle; background: #00b400; margin: -4px 7px 0 1px; width: 4px; height: 3px; }
.list i.dim { background: #007000; }
.list i.a { width: 5px; height: 6px; margin-right: 6px; }
.list i.c { width: 2px; height: 8px; margin-right: 9px; }
.list i.d { width: 8px; height: 1px; margin: -4px 6px 0 -2px; }
.list i.e { width: 3px; height: 1px; margin: -4px 7px 0 2px; }
.list i.f { width: 3px; margin: -4px 7px 0 2px; }
.list i.g { width: 2px; margin: -4px 8px 0 2px; }
.list i.h { width: 1px; height: 1px; margin: -4px 9px 0 2px; }
.list i.i { width: 2px; height: 1px; margin: -4px 9px 0 1px; }
.splitter { flex: none; width: 11px; padding: 484px 0 0 1px; }
.panel-body .splitter button {
  display: grid;
  place-items: center end;
  width: 9px;
  height: 52px;
  margin-top: 135px;
  background: #e1e1e1;
  border: 1px solid #adadad;
  border-right: 0;
}

/* scrollbars */
.vscroll { display: flex; flex-direction: column; width: 16px; background: #f0f0f0; }
.vscroll button, .foot > button { flex: none; width: 16px; height: 16px; background: #f0f0f0; }
.vscroll svg, .foot > button svg { width: 16px; height: 16px; fill: none; stroke: #555; stroke-width: 2; }
.vscroll span { flex: 1; margin-right: 1px; background: #cdcdcd; }
.vscroll.end span { flex: none; height: 18px; margin-top: auto; }
.list-scroll span { flex: none; height: 75px; margin-top: 376px; }
.corner { background: #c0c0c0; }

/* windows on the desktop */
.desktop {
  position: relative;
  flex: 1;
  overflow: hidden;
  background: #ababab;
  border: solid #696969;
  border-width: 2px 0 0 2px;
  border-top-color: #808080;
}
.window { position: absolute; display: flex; flex-direction: column; background: var(--frame); --frame: #003763; }
.window header { display: flex; flex: none; height: 26px; margin-left: 5px; padding-left: 3px; color: #fff; }
.window h2 { flex: 1; margin: 0; font: 12px/26px "Noto Sans", "Open Sans", sans-serif; white-space: nowrap; }
.ctl { display: flex; }
.ctl button { display: grid; place-items: center; width: 30px; }
.ctl svg { width: 12px; height: 12px; fill: none; stroke: #fff; }
.client {
  display: grid;
  flex: 1;
  min-height: 0;
  grid-template: minmax(0, 1fr) 16px / minmax(0, 1fr) 16px;
  margin: 0 5px 5px;
  background: #000;
  box-shadow: 0 -1px #607080;
}
.view { width: 100%; height: 100%; min-height: 0; overflow: hidden; }
.foot { display: flex; background: #f0f0f0; min-width: 0; }
.hthumb { flex: 1; margin: 1px 0; background: #cdcdcd; }
.tabs { display: flex; flex: none; width: 97px; overflow: hidden; font: 11px/16px "Noto Sans", sans-serif; isolation: isolate; }
.tabs button { position: relative; width: 26px; height: 16px; padding-left: 5px; text-align: left; }
.tabs button:first-child { width: 42px; padding-left: 7px; }
.tabs button::before {
  content: "";
  position: absolute;
  inset: 0;
  z-index: -1;
  background: #ececef;
  border-right: 1px solid #b8b8b8;
  transform: skewX(-18deg);
}
.tabs button:first-child::before { left: -8px; }
.tabs .on::before { background: #fff; }
.foot .overview { flex: 1; min-width: 0; height: 16px; background: #000; }

.lambda { left: 0; top: 0; width: 687px; height: 326px; --frame: #00457c; }
.fuel { left: 4px; top: 347px; width: 840px; height: 669px; --frame: #00335c; }
.hex { left: 26px; top: 26px; width: 2314px; height: 888px; }
.hex h2 { padding-left: 653px; }
.ignition { left: 791px; top: 31px; width: 656px; height: 289px; --frame: #004074; }
.sound-a { left: 1467px; top: 60px; width: 548px; height: 166px; --frame: #00335c; }
.sound-b { left: 1482px; top: 244px; width: 545px; height: 191px; --frame: #003a68; }
.exhaust { left: 871px; top: 462px; width: 1246px; height: 389px; --frame: #0078d7; }

/* map tables */
.map {
  width: 0;
  table-layout: fixed;
  border-collapse: separate;
  border-spacing: 0;
  font: 15px/17px "Liberation Mono", monospace;
  color: #0f0;
}
.ch { width: 69px; }
.ch.wide { width: 105px; }
.cg { width: 11px; }
.cv { width: 72px; }
.cs { width: 9px; }
.cb4 { width: 36px; }
.cb6 { width: 54px; }
.cb12 { width: 108px; }
.map th, .map td { height: 17px; padding: 0 8px 0 0; font-weight: 400; text-align: right; white-space: nowrap; }
.map td:last-child { padding: 0; }
.map th:first-child { padding-right: 12px; border-right: 3px double #0f0; }
.map th.n { padding-right: 30px; }
.map th.l { padding: 0 0 0 1px; text-align: left; }
.map .cap { padding: 0; text-align: center; font: 13px/17px "DejaVu Sans Condensed", "DejaVu Sans", sans-serif; color: #50b050; }
.map .rule { background: linear-gradient(#0f0, #0f0) 0 7px / 100% 1px no-repeat, linear-gradient(#0f0, #0f0) 0 9px / 100% 1px no-repeat; }
.map td { color: var(--ink); }
.violet { --ink: #8080e0; }
.violet path { fill: #8080e0; }
.salmon { --ink: #ff8080; }
.salmon path { fill: #ff8080; }
.full { --ink: #0f0; }
.full tr:nth-child(n+5) td:nth-child(n+3):nth-child(-n+14) { background: #500404; }
.map .s { color: #ff8080; }
.sel { display: block; margin-left: 1px; background: #aaffff; color: #f0f; }
.rule .mark { background: repeating-linear-gradient(#fff 0 1px, #f0f 1px 2px) 1px 6px / 63px 5px no-repeat; }
.map .cur { position: relative; }
.cur::after { content: ""; position: absolute; right: -4px; top: 0; width: 5px; height: 17px; background: repeating-linear-gradient(90deg, #fff 0 1px, #f0f 1px 2px); }
.bars { background: repeating-linear-gradient(90deg, transparent 0 8px, #000 8px 9px), linear-gradient(90deg, #0f0 72px, #ff8080 72px); background-size: 100% 15px; background-position: 0 2px; background-repeat: no-repeat; }
.bars.all { background-image: repeating-linear-gradient(90deg, transparent 0 8px, #000 8px 9px), linear-gradient(#0f0, #0f0); }
.c1 { background: #500404; }
.c2 { background: #503c04; }
.c3 { background: #4c5004; }
.c4 { background: #305004; }
.c5 { background: #0c5004; }
.c6 { background: #045008; }
.c7 { background: #043c18; }
.c8 { background: #042c28; }
.c9 { background: #04203c; }
.c10 { background: #040450; }

/* drawings */
.mono { font: 15px "Liberation Mono", monospace; }
.dimtext { fill: #50b050; }
.axis { fill: #00d800; }
.thin path { vector-effect: non-scaling-stroke; }
path.thin { vector-effect: non-scaling-stroke; }
.thin .dash { stroke: #346034; stroke-dasharray: 3 3; }
.thin .dot { stroke-width: 4; stroke-linecap: square; }
```
